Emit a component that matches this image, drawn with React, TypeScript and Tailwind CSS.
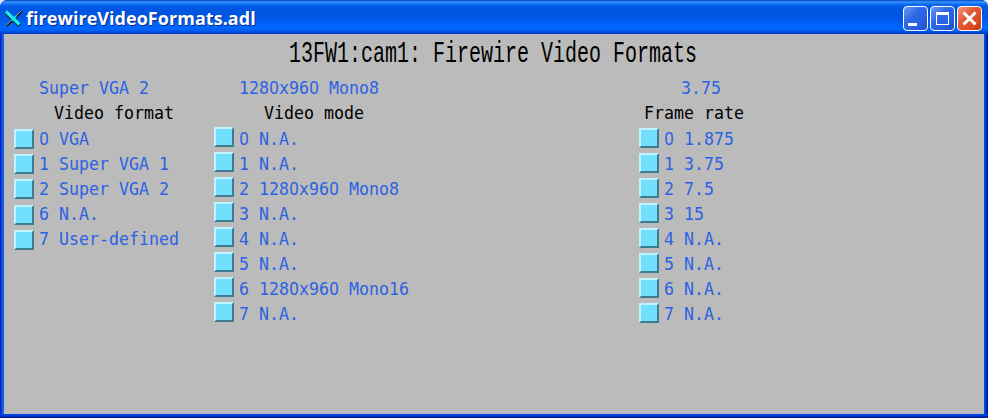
import React from "react";

type Option = { id: string; label: string };

function Mono({ text }: { text: string }) {
  return (
    <span className="block origin-left scale-y-[1.06] whitespace-pre font-['DejaVu_Sans_Mono',monospace] text-[16.61px] leading-[25px]">
      {text.split(/(0)/).map((part, i) =>
        part === "0" ? (
          <span key={i} className="inline-block w-[10px] text-center font-['Roboto',sans-serif] text-[17px] leading-none">
            0
          </span>
        ) : (
          part
        ),
      )}
    </span>
  );
}

function PushButton() {
  return (
    <button className="relative block h-5 w-5 shrink-0 border-2 border-t-[#c1f2ff] border-r-[#3d7c8f] border-b-[#3d7c8f] border-l-[#c1f2ff] bg-[#73dfff]" />
  );
}

function Choice({ option, inset }: { option: Option; inset: string }) {
  return (
    <div className="flex h-[25px] items-start gap-[5px]">
      <div className={inset}>
        <PushButton />
      </div>
      <Mono text={`${option.id} ${option.label}`} />
    </div>
  );
}

const formats: Option[] = [
  { id: "0", label: "VGA" },
  { id: "1", label: "Super VGA 1" },
  { id: "2", label: "Super VGA 2" },
  { id: "6", label: "N.A." },
  { id: "7", label: "User-defined" },
];
const modes: Option[] = [
  { id: "0", label: "N.A." },
  { id: "1", label: "N.A." },
  { id: "2", label: "1280x960 Mono8" },
  { id: "3", label: "N.A." },
  { id: "4", label: "N.A." },
  { id: "5", label: "N.A." },
  { id: "6", label: "1280x960 Mono16" },
  { id: "7", label: "N.A." },
];
const rates: Option[] = [
  { id: "0", label: "1.875" },
  { id: "1", label: "3.75" },
  { id: "2", label: "7.5" },
  { id: "3", label: "15" },
  { id: "4", label: "N.A." },
  { id: "5", label: "N.A." },
  { id: "6", label: "N.A." },
  { id: "7", label: "N.A." },
];

type ColumnProps = {
  current: string;
  currentPad: string;
  title: string;
  titlePad: string;
  options: Option[];
  insetFor: (i: number) => string;
  width: string;
};

function Column({ current, currentPad, title, titlePad, options, insetFor, width }: ColumnProps) {
  return (
    <section className={`shrink-0 text-[#2b62e3] ${width}`}>
      <div className={`h-[25px] ${currentPad}`}>
        <Mono text={current} />
      </div>
      <div className={`h-[26px] text-black ${titlePad}`}>
        <Mono text={title} />
      </div>
      {options.map((o, i) => (
        <Choice key={o.id} option={o} inset={insetFor(i)} />
      ))}
    </section>
  );
}

function TitleBar() {
  return (
    <header className="flex h-[34px] items-center bg-[linear-gradient(180deg,#0048c8_0px,#3a94ff_2px,#1070f4_4px,#0058e4_7px,#0054e0_14px,#0059ea_20px,#0066ff_26px,#0064fb_30px,#004bd8_32px,#003bc0_34px)] pr-[6px] pl-[5px]">
      <svg width="18" height="18" viewBox="0 0 18 18" className="mt-[3px] shrink-0">
        <path d="M1 2.5L15 15.5" stroke="#07233d" strokeWidth="4.4" />
        <path d="M1 1.5L14.5 14.5" stroke="#16eef4" strokeWidth="3.2" />
        <path d="M16.5 1.5L10.5 8M7.5 10.5L1.5 16" stroke="#111820" strokeWidth="2" />
        <path d="M16 1L10 7M7 9.5L1 15.5" stroke="#b7a68c" strokeWidth="1" />
        <path d="M11.5 5.5L7 10.5" stroke="#16eef4" strokeWidth="1.5" />
      </svg>
      <h1 className="mt-[2px] ml-[3px] w-[700px] whitespace-nowrap font-['Open_Sans',sans-serif] text-[18px] leading-[26px] font-bold tracking-[0.04px] text-white [text-shadow:1px_1px_0_#0a2a91]">
        firewireVideoFormats.adl
      </h1>
      <div className="mt-[3px] ml-auto flex gap-[2px]">
        <button className="flex h-[25px] w-[25px] items-end rounded-[4px] border border-white bg-[linear-gradient(135deg,#6a9bf6,#2f67e4_40%,#2860e6_70%,#1e4ec0)] pb-[4px] pl-[4px]">
          <span className="h-[3px] w-[9px] bg-white" />
        </button>
        <button className="flex h-[25px] w-[25px] items-center justify-center rounded-[4px] border border-white bg-[linear-gradient(135deg,#6a9bf6,#2f67e4_40%,#2860e6_70%,#1e4ec0)]">
          <span className="h-[13px] w-[13px] border border-t-[3px] border-white" />
        </button>
        <button className="flex h-[25px] w-[25px] items-center justify-center rounded-[4px] border border-white bg-[linear-gradient(135deg,#f0987c,#e35a34_40%,#dd4d22_70%,#b83814)]">
          <svg width="15" height="15" viewBox="0 0 15 15">
            <path d="M1.5 1.5L13.5 13.5M13.5 1.5L1.5 13.5" stroke="white" strokeWidth="3" />
          </svg>
        </button>
      </div>
    </header>
  );
}

export default function App() {
  return (
    <div className="h-[418px] w-[988px] overflow-hidden bg-[#e8e8f0]">
      <main className="flex h-full flex-col overflow-hidden rounded-t-[7px] bg-[#0039dc]">
        <TitleBar />
        <div className="min-h-0 flex-1 bg-[linear-gradient(90deg,#001ea0_0px,#0831d9_1px,#166aee_3px,#0855dd_4px,#0855dd_984px,#0048f0_985px,#0030c8_986px,#00138c_988px)] px-1">
          <div className="h-[380px] bg-[#bbbbbb]">
            <h2 className="h-[42px] origin-top scale-y-[1.45] pl-[285px] whitespace-pre font-['Liberation_Mono',monospace] text-[20px] leading-[28px]">
              13FW1:cam1: Firewire Video Formats
            </h2>
            <div className="flex pl-[10px]">
              <Column
                width="w-[200px]"
                current="Super VGA 2"
                currentPad="pl-[25px]"
                title="Video format"
                titlePad="pl-[40px]"
                options={formats}
                insetFor={(i) => (i < 3 ? "pt-[2px]" : "pt-[3px]")}
              />
              <Column
                width="w-[425px]"
                current="1280x960 Mono8"
                currentPad="pl-[25px]"
                title="Video mode"
                titlePad="pl-[50px]"
                options={modes}
                insetFor={() => "pt-0"}
              />
              <Column
                width="w-[200px]"
                current="3.75"
                currentPad="pl-[42px]"
                title="Frame rate"
                titlePad="pl-[5px]"
                options={rates}
                insetFor={() => "pt-px"}
              />
            </div>
          </div>
        </div>
        <div className="h-1 shrink-0 bg-[linear-gradient(180deg,#0050ee,#003bd7_40%,#00138c)]" />
      </main>
    </div>
  );
}
